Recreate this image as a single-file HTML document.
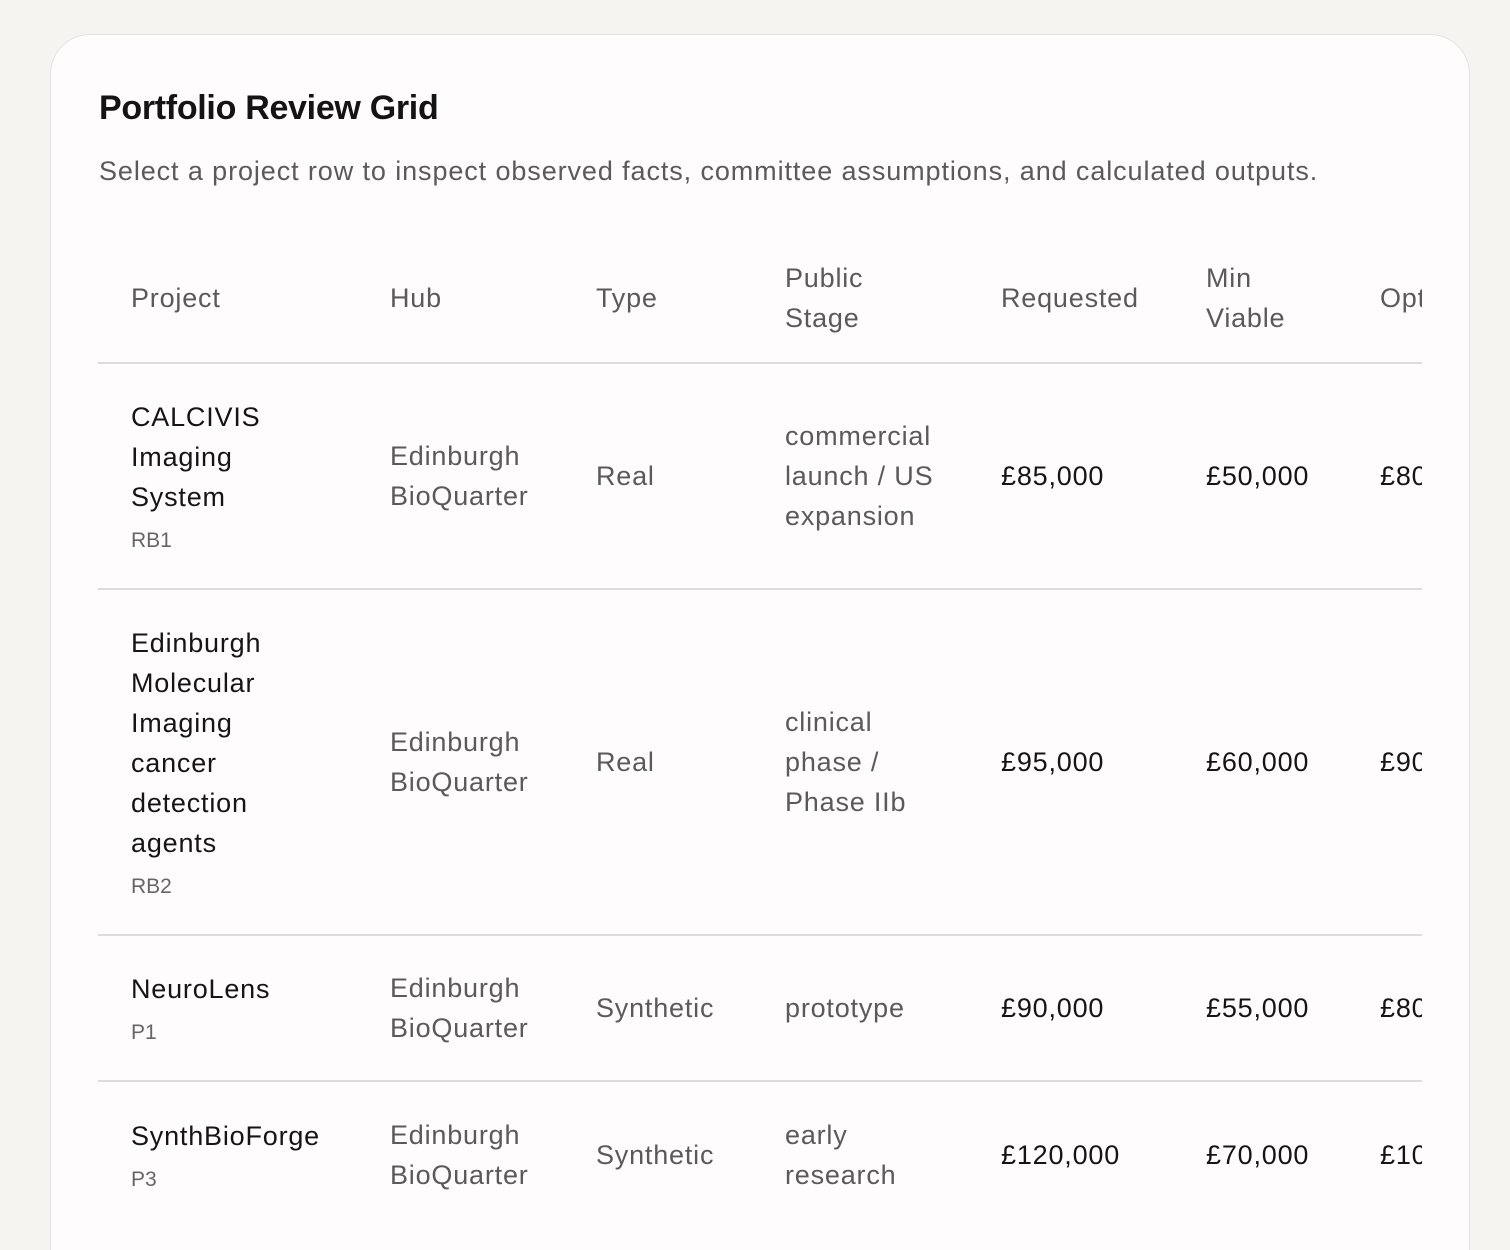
<!DOCTYPE html>
<html style="height:1250px;overflow:hidden"><head><meta charset="utf-8"><style>
*{box-sizing:border-box;margin:0;padding:0}
body{width:1510px;height:1250px;background:#f5f4f1;font-family:"Liberation Sans",sans-serif;overflow:hidden;position:relative}
.card{position:absolute;left:50px;top:34px;width:1420px;height:1216px;background:#fefcfc;border:1px solid #e6e4e0;border-bottom:none;border-radius:40px 40px 0 0;overflow:hidden}
h1{position:absolute;left:48px;top:54px;font-size:34px;font-weight:bold;color:#141414;letter-spacing:-0.3px}
.sub{position:absolute;left:48px;top:118px;font-size:27px;color:#5a5a5a;line-height:36px;letter-spacing:0.9px}
.wrap{position:absolute;left:47px;top:215px;width:1324px;overflow:hidden}
table{border-collapse:collapse;width:1500px}
td,th{vertical-align:middle;text-align:left;padding:33px 0 33px 33px;font-size:27px;line-height:40px;font-weight:normal;letter-spacing:0.8px}
th{color:#5a5a5a;padding-top:8px;padding-bottom:24px}
tr{border-bottom:2px solid #dedcda}
tr.last{border-bottom:none}
tr.r3 td{padding-top:32px;padding-bottom:32px}
.n{color:#151515}
.g{color:#5a5a5a}
.code{display:block;font-size:21px;line-height:28px;margin-top:10px;color:#666;letter-spacing:0}
</style></head><body>
<div class="card">
<h1>Portfolio Review Grid</h1>
<div class="sub">Select a project row to inspect observed facts, committee assumptions, and calculated outputs.</div>
<div class="wrap"><table>
<colgroup><col style="width:259px"><col style="width:206px"><col style="width:189px"><col style="width:216px"><col style="width:205px"><col style="width:174px"><col></colgroup>
<tr style="height:112px"><th>Project</th><th>Hub</th><th>Type</th><th>Public<br>Stage</th><th>Requested</th><th>Min<br>Viable</th><th>Optimal</th></tr>
<tr style="height:224px"><td class="n">CALCIVIS<br>Imaging<br>System<span class="code">RB1</span></td><td class="g">Edinburgh<br>BioQuarter</td><td class="g">Real</td><td class="g">commercial<br>launch / US<br>expansion</td><td class="n">£85,000</td><td class="n">£50,000</td><td class="n">£80,000</td></tr>
<tr style="height:342px"><td class="n">Edinburgh<br>Molecular<br>Imaging<br>cancer<br>detection<br>agents<span class="code">RB2</span></td><td class="g">Edinburgh<br>BioQuarter</td><td class="g">Real</td><td class="g">clinical<br>phase /<br>Phase IIb</td><td class="n">£95,000</td><td class="n">£60,000</td><td class="n">£90,000</td></tr>
<tr class="r3" style="height:142px"><td class="n">NeuroLens<span class="code">P1</span></td><td class="g">Edinburgh<br>BioQuarter</td><td class="g">Synthetic</td><td class="g">prototype</td><td class="n">£90,000</td><td class="n">£55,000</td><td class="n">£80,000</td></tr>
<tr class="last" style="height:144px"><td class="n">SynthBioForge<span class="code">P3</span></td><td class="g">Edinburgh<br>BioQuarter</td><td class="g">Synthetic</td><td class="g">early<br>research</td><td class="n">£120,000</td><td class="n">£70,000</td><td class="n">£100,000</td></tr>
</table></div>
</div>
</body></html>
